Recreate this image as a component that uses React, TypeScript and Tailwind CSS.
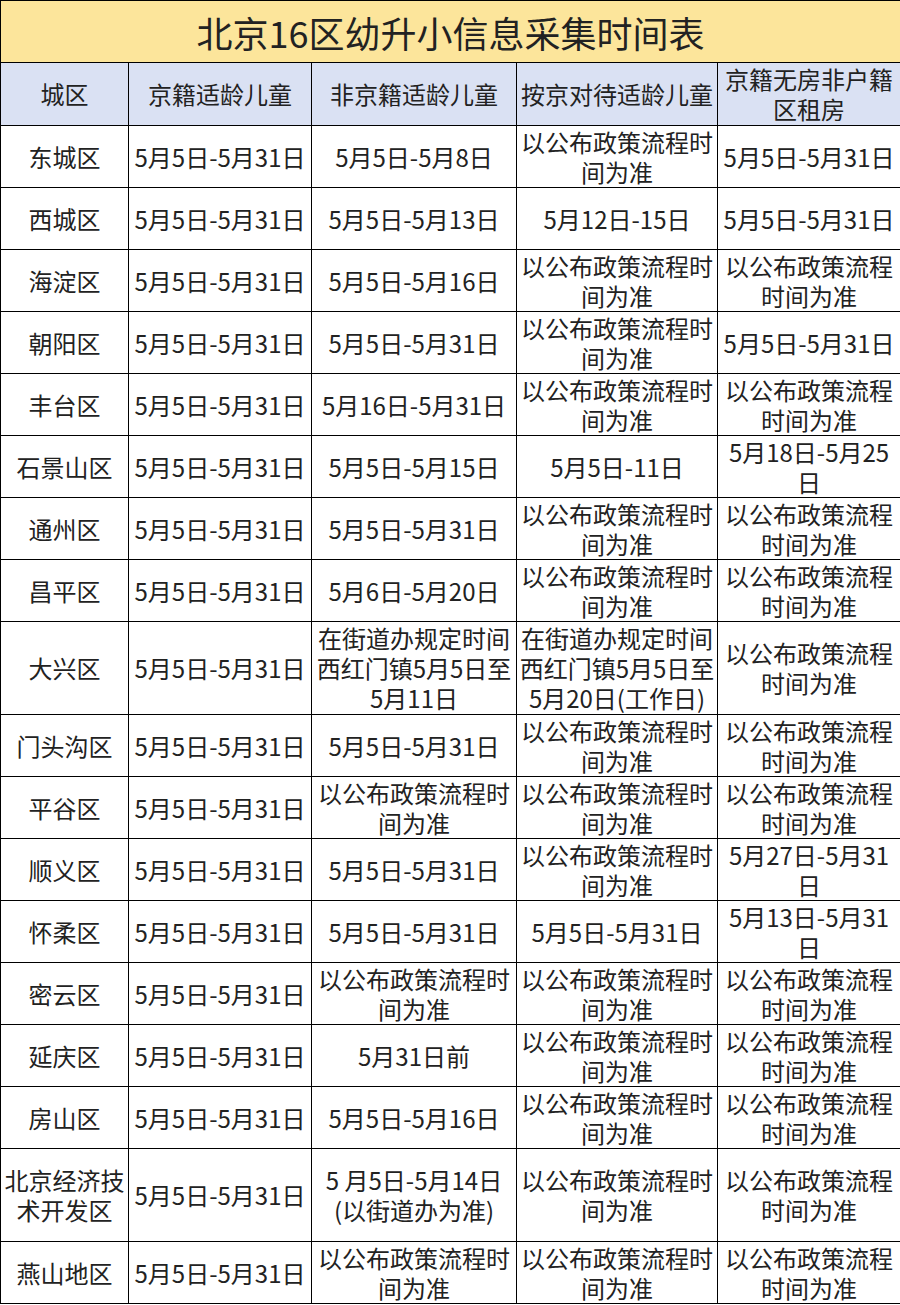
const P = "以公布政策流程时\n间为准";
const Q = "以公布政策流程\n时间为准";
const D = "5月5日-5月31日";

type Row = {
  area: string;
  a: string;
  b: string;
  c: string;
  d: string;
  tall?: boolean;
};

const rows: Row[] = [
  { area: "东城区", a: D, b: "5月5日-5月8日", c: P, d: D },
  { area: "西城区", a: D, b: "5月5日-5月13日", c: "5月12日-15日", d: D },
  { area: "海淀区", a: D, b: "5月5日-5月16日", c: P, d: Q },
  { area: "朝阳区", a: D, b: D, c: P, d: D },
  { area: "丰台区", a: D, b: "5月16日-5月31日", c: P, d: Q },
  { area: "石景山区", a: D, b: "5月5日-5月15日", c: "5月5日-11日", d: "5月18日-5月25\n日" },
  { area: "通州区", a: D, b: D, c: P, d: Q },
  { area: "昌平区", a: D, b: "5月6日-5月20日", c: P, d: Q },
  {
    area: "大兴区",
    a: D,
    b: "在街道办规定时间\n西红门镇5月5日至\n5月11日",
    c: "在街道办规定时间\n西红门镇5月5日至\n5月20日(工作日)",
    d: Q,
    tall: true,
  },
  { area: "门头沟区", a: D, b: D, c: P, d: Q },
  { area: "平谷区", a: D, b: P, c: P, d: Q },
  { area: "顺义区", a: D, b: D, c: P, d: "5月27日-5月31\n日" },
  { area: "怀柔区", a: D, b: D, c: D, d: "5月13日-5月31\n日" },
  { area: "密云区", a: D, b: P, c: P, d: Q },
  { area: "延庆区", a: D, b: "5月31日前", c: P, d: Q },
  { area: "房山区", a: D, b: "5月5日-5月16日", c: P, d: Q },
  {
    area: "北京经济技\n术开发区",
    a: D,
    b: "5 月5日-5月14日\n(以街道办为准)",
    c: P,
    d: Q,
    tall: true,
  },
  { area: "燕山地区", a: D, b: P, c: P, d: Q },
];

const cell =
  "border border-black text-center align-middle whitespace-pre-line p-0";

const App = () => {
  return (
    <div className="w-[900px] h-[1305px] bg-white text-[#222] font-['Noto_Sans_CJK_SC','Noto_Sans',sans-serif] overflow-hidden">
      <table className="w-[900px] border-collapse table-fixed text-[24px] leading-[30px]">
        <colgroup>
          <col className="w-[128px]" />
          <col className="w-[183px]" />
          <col className="w-[205px]" />
          <col className="w-[201px]" />
          <col className="w-[183px]" />
        </colgroup>
        <thead>
          <tr className="h-[62px] bg-[#fce59b]">
            <th colSpan={5} className={`${cell} font-normal text-[36px] leading-[40px]`}>
              北京16区幼升小信息采集时间表
            </th>
          </tr>
          <tr className="h-[63px] bg-[#dae1f3]">
            <th className={`${cell} font-normal`}>城区</th>
            <th className={`${cell} font-normal`}>京籍适龄儿童</th>
            <th className={`${cell} font-normal`}>非京籍适龄儿童</th>
            <th className={`${cell} font-normal`}>按京对待适龄儿童</th>
            <th className={`${cell} font-normal`}>{"京籍无房非户籍\n区租房"}</th>
          </tr>
        </thead>
        <tbody>
          {rows.map((r) => (
            <tr key={r.area} className={r.tall ? "h-[93px]" : "h-[62px]"}>
              <td className={cell}>{r.area}</td>
              <td className={cell}>{r.a}</td>
              <td className={cell}>{r.b}</td>
              <td className={cell}>{r.c}</td>
              <td className={cell}>{r.d}</td>
            </tr>
          ))}
        </tbody>
      </table>
    </div>
  );
};

export default App;
